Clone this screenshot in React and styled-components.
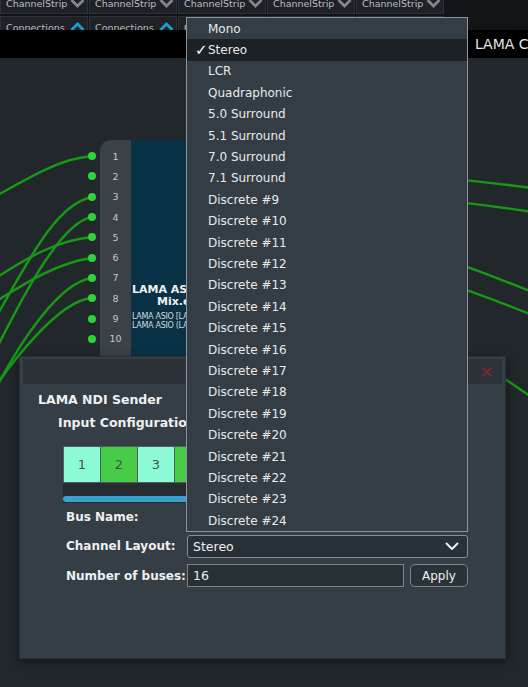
import React from 'react';
import styled, { createGlobalStyle } from 'styled-components';

const GlobalStyle = createGlobalStyle`
  html, body {
    margin: 0;
    padding: 0;
    background: #1f2428;
  }
  body {
    font-family: "DejaVu Sans", Verdana, sans-serif;
  }
`;

const Page = styled.div`
  position: relative;
  width: 528px;
  height: 687px;
  overflow: hidden;
  display: flex;
  flex-direction: column;
  background: #22272b;
`;

// top tab strip
const TabBar = styled.div`
  height: 30px;
  overflow: hidden;
  background: #121518;
`;

const TabGrid = styled.div`
  display: flex;
  gap: 1px;
  margin-top: -8px;
`;

const TabColumn = styled.div`
  width: 88px;
  display: flex;
  flex-direction: column;
  gap: 2px;
`;

const TabCell = styled.div`
  height: 22px;
  box-sizing: border-box;
  display: flex;
  align-items: center;
  justify-content: space-between;
  padding: 0 2px 0 5px;
  background: #1e2226;
  border: 1px solid #2c3237;
  color: #b9bec2;
  font-size: 9.5px;
  white-space: nowrap;
`;

const Chevron = styled.svg`
  width: 15px;
  height: 10px;
  flex: none;
  stroke: ${({ $up }) => ($up ? '#14a3cf' : '#80878c')};
  stroke-width: 2.8;
  fill: none;
`;

const TitleBar = styled.div`
  height: 28px;
  background: #000;
  color: #e6e6e6;
  font-size: 14px;
  display: flex;
  align-items: center;
  padding-left: 475px;
  white-space: nowrap;
  overflow: hidden;
`;

const Canvas = styled.div`
  flex: 1;
  position: relative;
  background: #22272b;
`;

const Wires = styled.svg`
  position: absolute;
  inset: 0;
  width: 100%;
  height: 100%;
  fill: none;
  stroke: #169a16;
  stroke-width: 2.4;
`;

// node on the canvas
const Node = styled.div`
  position: absolute;
  left: 100px;
  top: 82px;
  width: 200px;
  height: 240px;
  display: flex;
`;

const PortColumn = styled.div`
  width: 31px;
  background: #3a4147;
  border-top-left-radius: 11px;
  padding-top: 6px;
  box-sizing: border-box;
  display: grid;
  grid-auto-rows: 20.3px;
`;

const Port = styled.div`
  position: relative;
  display: flex;
  align-items: center;
  justify-content: center;
  color: #c4c8cc;
  font-size: 9.5px;

  &::before {
    content: '';
    position: absolute;
    left: -12px;
    top: 50%;
    width: 8px;
    height: 8px;
    margin-top: -4px;
    border-radius: 50%;
    background: #2fd23a;
  }
`;

const NodeBody = styled.div`
  flex: 1;
  background: #0a3246;
  padding-top: 144px;
  box-sizing: border-box;
  color: #f2f2f2;
  white-space: nowrap;
  overflow: hidden;
`;

const NodeTitle = styled.div`
  font-weight: bold;
  font-size: 11px;
  line-height: 12px;
  padding-left: ${({ $indent }) => $indent || 1}px;
`;

const NodeSub = styled.div`
  font-size: 8px;
  line-height: 9px;
  color: #d6d9dc;
  padding-left: 1px;
  margin-top: ${({ $gap }) => $gap || 0}px;
  letter-spacing: -0.3px;
`;

// dialog window
const Dialog = styled.div`
  position: absolute;
  left: 19px;
  top: 356px;
  width: 487px;
  height: 303px;
  box-sizing: border-box;
  background: #353e44;
  border: 1px solid #2a3135;
  padding: 2px 3px;
  box-shadow: 0 3px 10px rgba(0, 0, 0, 0.45);
`;

const DialogHeader = styled.div`
  height: 25px;
  background: #2c3338;
  display: flex;
  align-items: center;
  justify-content: flex-end;
  padding-right: 10px;
`;

const CloseIcon = styled.svg`
  width: 10px;
  height: 10px;
  stroke: #a21f29;
  stroke-width: 1.4;
`;

const DialogBody = styled.div`
  padding: 8px 0 0 15px;
  color: #eef0f1;
`;

const DialogTitle = styled.div`
  font-weight: bold;
  font-size: 12.5px;
  line-height: 16px;
`;

const SectionLabel = styled.div`
  font-weight: bold;
  font-size: 12.5px;
  line-height: 16px;
  margin: 7px 0 0 20px;
`;

const CellArea = styled.div`
  margin: 15px 0 0 25px;
  width: 380px;
  overflow: hidden;
`;

const CellRow = styled.div`
  display: flex;
  background: #555b60;
  gap: 1px;
  padding: 1px;
  width: max-content;
`;

const Cell = styled.div`
  width: 36px;
  height: 35px;
  display: flex;
  align-items: center;
  justify-content: center;
  background: ${({ $on }) => ($on ? '#46cc46' : '#8dfcd6')};
  color: #4b5155;
  font-size: 13px;
`;

const ScrollTrack = styled.div`
  height: 20px;
  background: #262c31;
  display: flex;
  align-items: flex-end;
  box-sizing: border-box;
`;

const ScrollThumb = styled.div`
  width: 260px;
  height: 6px;
  border-radius: 3px;
  background: #3aa0cd;
  margin-bottom: 1px;
`;

const Form = styled.div`
  display: grid;
  grid-template-columns: 121px 217px 6px 58px;
  grid-auto-rows: 23px;
  row-gap: 6.5px;
  margin: 2px 0 0 28px;
  align-items: center;
`;

const Label = styled.div`
  grid-column: 1;
  font-weight: bold;
  font-size: 12px;
  white-space: nowrap;
`;

const Select = styled.div`
  grid-column: 2 / span 3;
  height: 23px;
  box-sizing: border-box;
  border: 1px solid #868d92;
  border-radius: 3px;
  background: #283137;
  display: flex;
  align-items: center;
  justify-content: space-between;
  padding: 0 8px 0 5px;
  font-size: 12.5px;
  color: #eef0f1;
`;

const SelectChevron = styled.svg`
  width: 14px;
  height: 8px;
  fill: none;
  stroke: #f0f0f0;
  stroke-width: 2;
`;

const TextInput = styled.div`
  grid-column: 2;
  height: 23px;
  box-sizing: border-box;
  border: 1px solid #7d8489;
  background: #263035;
  display: flex;
  align-items: center;
  padding-left: 5px;
  font-size: 12.5px;
`;

const Button = styled.div`
  grid-column: 4;
  height: 23px;
  box-sizing: border-box;
  border: 1px solid #7d8489;
  border-radius: 5px;
  background: #2a3338;
  display: flex;
  align-items: center;
  justify-content: center;
  font-size: 12px;
`;

// open dropdown list
const Menu = styled.div`
  position: absolute;
  left: 186px;
  top: 17px;
  width: 282px;
  box-sizing: border-box;
  border: 1px solid #8e9499;
  background: #343d43;
`;

const MenuItem = styled.div`
  position: relative;
  height: 21.4px;
  display: flex;
  align-items: center;
  padding-left: 21px;
  font-size: 12px;
  color: #e8eaeb;
  background: ${({ $active }) => ($active ? '#1c2125' : 'transparent')};
`;

const Check = styled.span`
  position: absolute;
  left: 8px;
  font-size: 15px;
  font-weight: bold;
  color: #fff;
`;

const tabs = [0, 1, 2, 3, 4];
const ports = [1, 2, 3, 4, 5, 6, 7, 8, 9, 10];
const cells = [1, 2, 3, 4, 5, 6, 7, 8, 9, 10];

const layouts = [
  'Mono', 'Stereo', 'LCR', 'Quadraphonic',
  '5.0 Surround', '5.1 Surround', '7.0 Surround', '7.1 Surround',
  ...Array.from({ length: 16 }, (_, i) => `Discrete #${i + 9}`),
];

const wirePaths = [
  'M -40 215 C 20 185, 50 160, 92 156',
  'M -30 362 C 20 280, 50 205, 92 197',
  'M -20 382 C 20 300, 60 222, 92 217',
  'M -10 282 C 30 255, 60 240, 92 237',
  'M -10 305 C 30 280, 60 262, 92 258',
  'M -10 400 C 20 340, 60 282, 92 278',
  'M -30 425 C 10 360, 60 300, 92 298',
  'M 300 170 C 380 172, 440 176, 540 189',
  'M 300 190 C 380 194, 440 198, 540 213',
  'M 300 220 C 380 235, 440 255, 540 295',
  'M 300 245 C 380 260, 440 278, 540 318',
  'M 480 360 C 495 372, 510 384, 540 402',
];

const App = () => {
  return (
    <>
      <GlobalStyle />
      <Page>
        <TabBar>
          <TabGrid>
            {tabs.map((t) => (
              <TabColumn key={t}>
                <TabCell>
                  ChannelStrip
                  <Chevron viewBox="0 0 15 10"><path d="M1.5 2 L7.5 8 L13.5 2" /></Chevron>
                </TabCell>
                <TabCell>
                  Connections
                  <Chevron $up viewBox="0 0 15 10"><path d="M1.5 8 L7.5 2 L13.5 8" /></Chevron>
                </TabCell>
              </TabColumn>
            ))}
          </TabGrid>
        </TabBar>
        <TitleBar>LAMA Control Panel</TitleBar>
        <Canvas>
          <Wires viewBox="0 58 528 629" preserveAspectRatio="none">
            {wirePaths.map((d, i) => (
              <path key={i} d={d} />
            ))}
          </Wires>
          <Node>
            <PortColumn>
              {ports.map((p) => (
                <Port key={p}>{p}</Port>
              ))}
            </PortColumn>
            <NodeBody>
              <NodeTitle>LAMA ASIO Input</NodeTitle>
              <NodeTitle $indent={26}>Mix.exe</NodeTitle>
              <NodeSub $gap={4}>LAMA ASIO [LAMA ASIO Driver]</NodeSub>
              <NodeSub>LAMA ASIO (LAMA ASIO Driver)</NodeSub>
            </NodeBody>
          </Node>
        </Canvas>

        <Dialog>
          <DialogHeader>
            <CloseIcon viewBox="0 0 10 10"><path d="M0.5 0.5 L9.5 9.5 M9.5 0.5 L0.5 9.5" /></CloseIcon>
          </DialogHeader>
          <DialogBody>
            <DialogTitle>LAMA NDI Sender</DialogTitle>
            <SectionLabel>Input Configuration</SectionLabel>
            <CellArea>
              <CellRow>
                {cells.map((c) => (
                  <Cell key={c} $on={c % 2 === 0}>{c}</Cell>
                ))}
              </CellRow>
              <ScrollTrack>
                <ScrollThumb />
              </ScrollTrack>
            </CellArea>
            <Form>
              <Label>Bus Name:</Label>
              <Label>Channel Layout:</Label>
              <Select>
                Stereo
                <SelectChevron viewBox="0 0 14 8"><path d="M1 1 L7 7 L13 1" /></SelectChevron>
              </Select>
              <Label>Number of buses:</Label>
              <TextInput>16</TextInput>
              <Button>Apply</Button>
            </Form>
          </DialogBody>
        </Dialog>

        <Menu>
          {layouts.map((name) => (
            <MenuItem key={name} $active={name === 'Stereo'}>
              {name === 'Stereo' && <Check>✓</Check>}
              {name}
            </MenuItem>
          ))}
        </Menu>
      </Page>
    </>
  );
};

export default App;
